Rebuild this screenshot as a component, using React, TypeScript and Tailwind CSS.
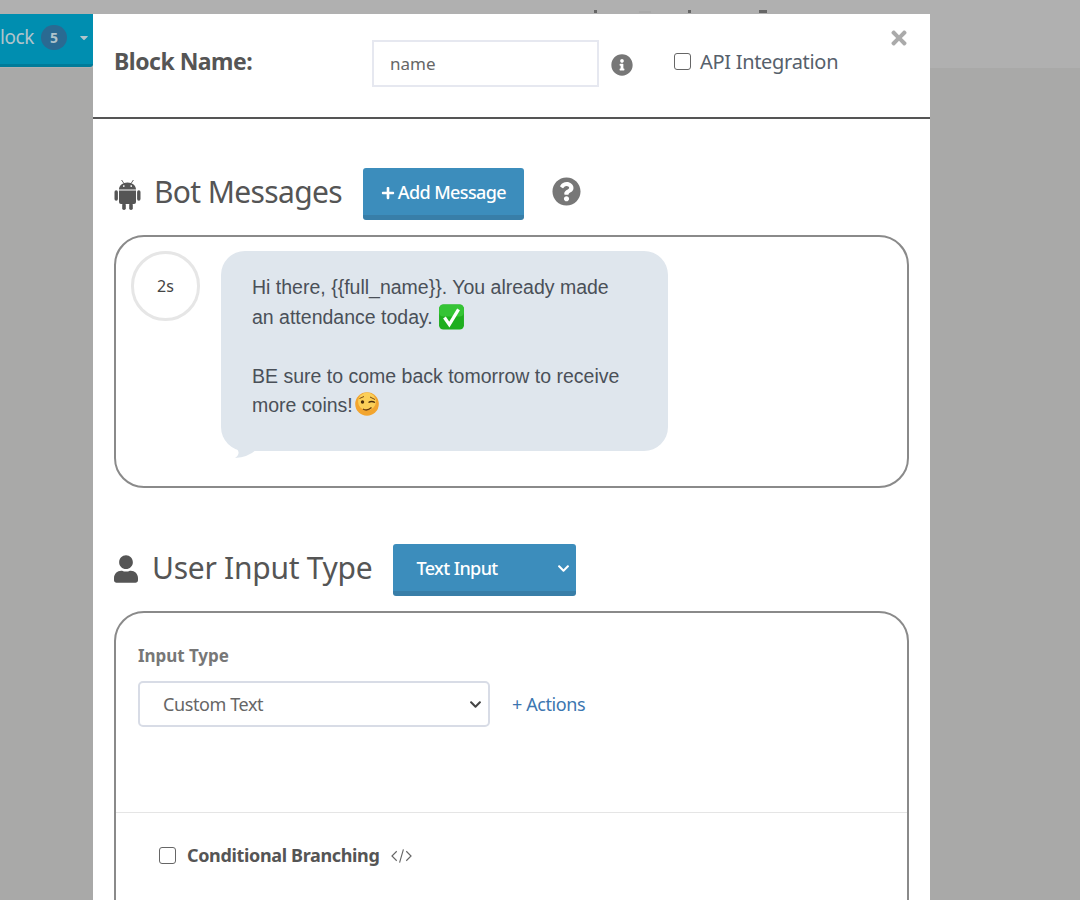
import React from 'react';
import { FaUser, FaInfoCircle, FaQuestionCircle, FaTimes, FaPlus, FaCaretDown, FaChevronDown } from 'react-icons/fa';

function AndroidIcon() {
  return (
    <svg viewBox="0 0 27 31" className="h-[31px] w-[27px] text-[#555]" fill="currentColor">
      <path d="M7.6 1 L10 4.6 M19.4 1 L17 4.6" stroke="currentColor" strokeWidth="0.9" fill="none" />
      <path fillRule="evenodd" d="M5 10.4 C5 6.4 8.6 3.4 13.5 3.4 C18.4 3.4 22 6.4 22 10.4 Z M9.8 6.2 a0.8 0.8 0 1 0 0.01 0 Z M17.2 6.2 a0.8 0.8 0 1 0 0.01 0 Z" />
      <path d="M5 11.4 H22 V23 a2 2 0 0 1 -2 2 H7 a2 2 0 0 1 -2 -2 Z" />
      <rect x="0.5" y="11.2" width="3.4" height="10.6" rx="1.7" />
      <rect x="23.1" y="11.2" width="3.4" height="10.6" rx="1.7" />
      <rect x="8.2" y="24" width="3.6" height="7" rx="1.8" />
      <rect x="15.2" y="24" width="3.6" height="7" rx="1.8" />
    </svg>
  );
}

function CheckEmoji() {
  return (
    <svg viewBox="0 0 24 24" className="inline-block h-[26px] w-[27px] align-[-6px]">
      <rect x="0.5" y="0.5" width="23" height="23" rx="4" fill="#1fae1f" />
      <rect x="0.5" y="0.5" width="23" height="11" rx="4" fill="#35c435" />
      <path d="M5.5 12.5 L10 19 L18.5 5" fill="none" stroke="#fff" strokeWidth="3" />
    </svg>
  );
}

function WinkEmoji() {
  return (
    <svg viewBox="0 0 24 24" className="ml-[2px] inline-block h-[24px] w-[24px] align-[-4px]">
      <circle cx="12" cy="12" r="11.8" fill="#f2a52f" />
      <circle cx="12" cy="9.5" r="9" fill="#fbcf58" />
      <path d="M4.5 6.5 L9 4.5" stroke="#7a4a12" strokeWidth="1" fill="none" />
      <path d="M15 5 L20 7.5" stroke="#7a4a12" strokeWidth="1" fill="none" />
      <circle cx="7.5" cy="10" r="1.7" fill="#4a2d0c" />
      <path d="M13.5 10.5 Q16.5 8.5 20 10.5" stroke="#4a2d0c" strokeWidth="1.3" fill="none" />
      <path d="M8 17 Q12 19.5 16.5 15.5" stroke="#6b3d0e" strokeWidth="1.3" fill="none" />
    </svg>
  );
}

export default function App() {
  return (
    <div className="relative h-[900px] overflow-hidden bg-[#a9a9a8] font-['Noto_Sans',sans-serif] text-[#555]">
      <div className="h-[68px] bg-[#b0b0b0]">
        {/* bits of the page title that stick out above the modal */}
        <div className="flex h-[14px] items-end pb-px pl-[594px]">
          <span className="h-[3px] w-[3px] bg-[#666]" />
          <span className="ml-[42px] h-[2px] w-[12px] bg-[#a9a9a9]" />
          <span className="ml-[37px] h-[3px] w-[3px] bg-[#666]" />
          <span className="ml-[68px] h-[3px] w-[8px] bg-[#666]" />
        </div>
        <div className="flex h-[53px] w-[93px] items-center justify-end overflow-hidden rounded-br-[3px] border-b-[3px] border-[#007b99] bg-[#008eb0] pr-[3px] pb-[4px] text-[#b0c4cb]">
          <span className="text-[19px] tracking-[-0.4px]">lock</span>
          <span className="ml-[7px] flex h-[25px] w-[28px] items-center justify-center rounded-full bg-[#2a6a92] text-[14px] font-bold">5</span>
          <FaCaretDown className="ml-[11px] h-[13px] w-[13px]" />
        </div>
      </div>

      {/* modal */}
      <div className="absolute top-[14px] left-[93px] w-[837px] bg-white">
        <div className="relative flex h-[105px] items-center border-b-2 border-[#555] pb-[8px] pl-[21px]">
          <span className="w-[258px] text-[23px] font-bold tracking-[-0.5px] text-[#555]">Block Name:</span>
          <input
            readOnly
            value="name"
            className="mt-[4px] h-[47px] w-[227px] border-2 border-[#e6e8f0] pl-[16px] text-[17px] text-[#666] outline-none"
          />
          <FaInfoCircle className="mt-[6px] ml-[12px] h-[22px] w-[22px] text-[#777]" />
          <input type="checkbox" readOnly className="ml-[41px] h-[17px] w-[17px] appearance-none rounded-[3px] border border-[#666] bg-white" />
          <span className="ml-[9px] text-[20px] tracking-[-0.3px] text-[#56606b]">API Integration</span>
          <FaTimes className="absolute top-[13px] right-[20px] h-[22px] w-[22px] text-[#aaa]" />
        </div>

        <div className="px-[21px]">
          <div className="mt-[49px] flex h-[52px] items-center">
            <AndroidIcon />
            <span className="mb-[6px] ml-[13px] text-[30px] tracking-[-0.65px] text-[#555]">Bot Messages</span>
            <button className="ml-[21px] flex h-[52px] w-[161px] items-center justify-center gap-[3px] rounded-[3px] border-b-[5px] border-[#387ea8] bg-[#3c8dbc] pt-[2px] text-[18px] font-medium tracking-[-0.6px] text-white">
              <FaPlus className="h-[14px] w-[14px]" /> Add Message
            </button>
            <FaQuestionCircle className="mb-[5px] ml-[28px] h-[29px] w-[29px] text-[#777]" />
          </div>

          <div className="mt-[15px] flex h-[253px] items-start gap-[21px] rounded-[30px] border-2 border-[#8a8a8a] pt-[14px] pl-[15px]">
            <div className="flex h-[70px] w-[69px] items-center justify-center rounded-full border-[3px] border-[#e6e6e6] text-[16px] text-[#444]">2s</div>
            <div className="relative h-[200px] w-[447px] rounded-[24px] bg-[#dfe6ed] pt-[22px] pl-[31px] font-['Liberation_Sans',sans-serif] text-[19.5px] leading-[29.5px] text-[#4a5058]">
              <div>Hi there, {'{{full_name}}'}. You already made</div>
              <div className="h-[29.5px]">an attendance today. <CheckEmoji /></div>
              <div className="h-[29.5px]" />
              <div>BE sure to come back tomorrow to receive</div>
              <div className="h-[29.5px]">more coins!<WinkEmoji /></div>
              <svg viewBox="0 0 24 10" className="absolute top-[198px] left-[12px] h-[10px] w-[24px]">
                <path d="M4 0 L24 0 Q16 8 2 9 Q8 5 4 0 Z" fill="#dfe6ed" />
              </svg>
            </div>
          </div>

          <div className="mt-[56px] flex h-[52px] items-center">
            <FaUser className="mb-[2px] h-[28px] w-[24px] text-[#555]" />
            <span className="mb-[6px] ml-[14px] text-[30px] tracking-[-0.27px] text-[#555]">User Input Type</span>
            <div className="ml-[21px] flex h-[52px] w-[183px] items-center justify-between rounded-[3px] border-b-[5px] border-[#387ea8] bg-[#3c8dbc] pt-[2px] pr-[6px] pl-[23px] text-[18px] font-medium tracking-[-0.6px] text-white">
              Text Input
              <FaChevronDown className="h-[13px] w-[13px]" />
            </div>
          </div>

          <div className="mt-[15px] h-[320px] rounded-t-[30px] border-2 border-[#8a8a8a]">
            <div className="h-[200px] border-b border-[#e5e5e5] pt-[32px] pl-[22px]">
              <div className="text-[17px] leading-[22px] font-bold tracking-[-0.05px] text-[#777]">Input Type</div>
              <div className="mt-[14px] flex items-center">
                <div className="flex h-[46px] w-[352px] items-center justify-between rounded-[5px] border-2 border-[#d8dce6] pt-[1px] pr-[6px] pl-[23px] text-[18px] tracking-[-0.4px] text-[#666]">
                  Custom Text
                  <FaChevronDown className="h-[13px] w-[13px] text-[#444]" />
                </div>
                <span className="ml-[22px] text-[18px] tracking-[-0.4px] text-[#3c76b0]">+ Actions</span>
              </div>
            </div>
            <div className="flex items-center pt-[29px] pl-[43px]">
              <input type="checkbox" readOnly className="h-[17px] w-[17px] appearance-none rounded-[3px] border border-[#666] bg-white" />
              <span className="ml-[11px] text-[18px] font-bold tracking-[-0.35px] text-[#555]">Conditional Branching</span>
              <svg viewBox="0 0 22 16" className="ml-[12px] h-[16px] w-[21px]" fill="none" stroke="#666" strokeWidth="1.2">
                <path d="M6 3 L1 8 L6 13 M16 3 L21 8 L16 13 M13 1 L9 15" />
              </svg>
            </div>
          </div>
        </div>
      </div>
    </div>
  );
}
